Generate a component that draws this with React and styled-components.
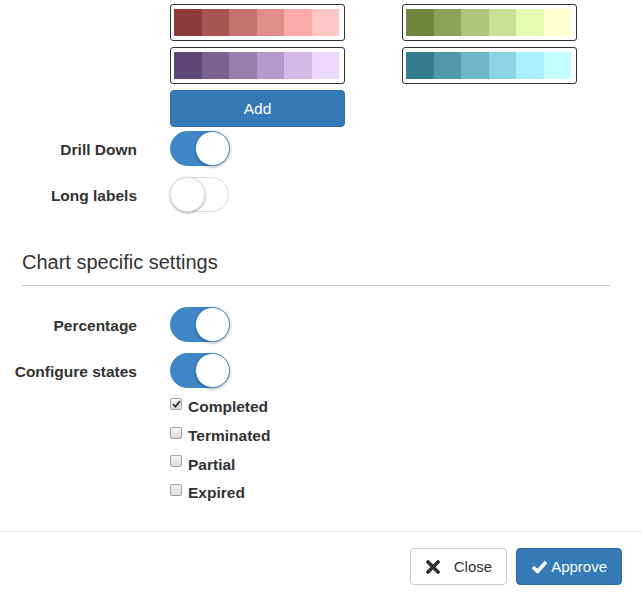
import React, { useState } from 'react';
import styled, { createGlobalStyle } from 'styled-components';

const GlobalStyle = createGlobalStyle`
  html, body {
    margin: 0;
    padding: 0;
    background: #fff;
    font-family: "Liberation Sans", Arial, sans-serif;
    color: #333;
  }
`;

const palettes = [
  ['#8c3a3a', '#a95452', '#c6706f', '#e28d8b', '#ffaaaa', '#ffc6c6'],
  ['#6f873d', '#8ba359', '#aac478', '#c8e094', '#e4fcb2', '#ffffd0'],
  ['#5d4777', '#7a6290', '#967fad', '#b39ccb', '#d1bae8', '#edd8ff'],
  ['#347d8f', '#5099ab', '#6db5c9', '#8bd3e7', '#a8f0ff', '#c6ffff'],
];

const Page = styled.div`
  width: 642px;
  height: 593px;
  display: flex;
  flex-direction: column;
  overflow: hidden;
`;

const Body = styled.div`
  flex: 1;
  padding-top: 4px;
`;

const Row = styled.div`
  display: grid;
  grid-template-columns: 137px 1fr;
  column-gap: 33px;
  align-items: center;
  margin-top: ${p => p.$mt || 0}px;
`;

const Label = styled.label`
  text-align: right;
  font-weight: bold;
  font-size: 15.5px;
  padding-top: 2px;
`;

const PaletteGrid = styled.div`
  display: grid;
  grid-template-columns: 175px 175px;
  column-gap: 57px;
  row-gap: 6px;
`;

const PaletteBox = styled.div`
  display: flex;
  box-sizing: border-box;
  height: 37px;
  width: 175px;
  padding: 4px 5px 4px 3px;
  border: 1px solid #333;
  border-radius: 3px;
`;

const Swatch = styled.div`
  flex: 1;
  background: ${p => p.$color};
`;

const AddButton = styled.button`
  width: 175px;
  height: 37px;
  margin-top: 6px;
  border: 1px solid #2e6da4;
  border-radius: 4px;
  background: #337ab7;
  color: #fff;
  font-family: inherit;
  font-size: 15.5px;
`;

const Switch = styled.div`
  position: relative;
  box-sizing: border-box;
  width: 59px;
  height: 35px;
  border-radius: 18px;
  border: 1px solid ${p => (p.$on ? '#3f88c8' : '#dfdfdf')};
  background: ${p => (p.$on ? '#3f88c8' : '#fff')};
  cursor: pointer;
`;

const Knob = styled.span`
  position: absolute;
  top: -1px;
  left: ${p => (p.$on ? '24px' : '-1px')};
  width: 35px;
  height: 35px;
  box-sizing: border-box;
  border-radius: 50%;
  background: #fff;
  border: 1px solid ${p => (p.$on ? '#3f88c8' : '#e2e2e2')};
  box-shadow: 0 1px 3px rgba(0, 0, 0, 0.35);
`;

const SectionTitle = styled.h4`
  margin: 39px 32px 0 22px;
  padding-bottom: 12px;
  border-bottom: 1px solid #c8c8c8;
  font-size: 20px;
  font-weight: normal;
  line-height: 22px;
  color: #333;
`;

const CheckList = styled.div`
  display: flex;
  flex-direction: column;
  margin-top: 5px;
`;

const CheckItem = styled.label`
  display: flex;
  align-items: center;
  height: 28.7px;
  gap: 6px;
  font-weight: bold;
  font-size: 15.5px;
  color: #333;
`;

const Box = styled.span`
  box-sizing: border-box;
  width: 12px;
  height: 12px;
  margin-top: -7px;
  border: 1px solid #a5a5a5;
  border-radius: 2px;
  background: linear-gradient(#f4f4f4, #dcdcdc);
  display: flex;
  align-items: center;
  justify-content: center;
`;

const Footer = styled.div`
  border-top: 1px solid #e5e5e5;
  padding: 16px 20px 8px;
  display: flex;
  justify-content: flex-end;
  gap: 9px;
`;

const Button = styled.button`
  display: flex;
  align-items: center;
  gap: ${p => (p.$primary ? '3px' : '14px')};
  height: 37px;
  padding: 0 14px 0 ${p => (p.$primary ? '14px' : '15px')};
  border-radius: 4px;
  border: 1px solid ${p => (p.$primary ? '#2e6da4' : '#ccc')};
  background: ${p => (p.$primary ? '#337ab7' : '#fff')};
  color: ${p => (p.$primary ? '#fff' : '#333')};
  font-family: inherit;
  font-size: 15px;
`;

const Toggle = ({ on }) => (
  <Switch $on={on}>
    <Knob $on={on} />
  </Switch>
);

const CheckMark = () => (
  <svg width="9" height="8" viewBox="0 0 9 8">
    <path d="M1 4.2 L3.4 6.6 L8 1.2" fill="none" stroke="#333" strokeWidth="1.8" />
  </svg>
);

const states = [
  ['Completed', true],
  ['Terminated', false],
  ['Partial', false],
  ['Expired', false],
];

export default function App() {
  const [drill] = useState(true);
  return (
    <Page>
      <GlobalStyle />
      <Body>
        <Row>
          <span />
          <div>
            <PaletteGrid>
              {palettes.map((p, i) => (
                <PaletteBox key={i}>
                  {p.map(c => (
                    <Swatch key={c} $color={c} />
                  ))}
                </PaletteBox>
              ))}
            </PaletteGrid>
            <AddButton>Add</AddButton>
          </div>
        </Row>
        <Row $mt={4}>
          <Label>Drill Down</Label>
          <Toggle on={drill} />
        </Row>
        <Row $mt={11}>
          <Label>Long labels</Label>
          <Toggle on={false} />
        </Row>
        <SectionTitle>Chart specific settings</SectionTitle>
        <Row $mt={21}>
          <Label>Percentage</Label>
          <Toggle on />
        </Row>
        <Row $mt={11}>
          <Label>Configure states</Label>
          <Toggle on />
        </Row>
        <Row>
          <span />
          <CheckList>
            {states.map(([name, checked]) => (
              <CheckItem key={name}>
                <Box>{checked && <CheckMark />}</Box>
                {name}
              </CheckItem>
            ))}
          </CheckList>
        </Row>
      </Body>
      <Footer>
        <Button>
          <svg width="14" height="14" viewBox="0 0 14 14">
            <path d="M2 2 L12 12 M12 2 L2 12" stroke="#333" strokeWidth="3.8" strokeLinecap="round" />
          </svg>
          Close
        </Button>
        <Button $primary>
          <svg width="17" height="15" viewBox="0 0 17 15">
            <path d="M2 8 L6.5 12.5 L15 3" fill="none" stroke="#fff" strokeWidth="3.6" strokeLinejoin="round" />
          </svg>
          Approve
        </Button>
      </Footer>
    </Page>
  );
}
